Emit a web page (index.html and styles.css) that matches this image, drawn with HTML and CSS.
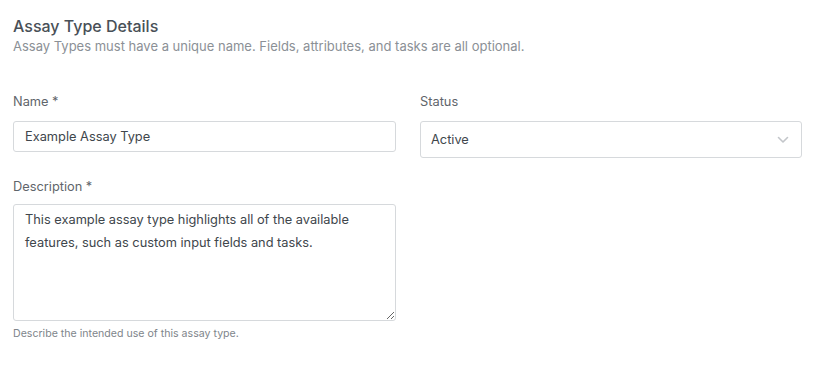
FILE: index.html
```html
<!DOCTYPE html>
<html lang="en">
<head>
    <meta charset="UTF-8">
    <meta name="viewport" content="width=device-width, initial-scale=1.0">
    <title>Assay Type Details</title>
    <link rel="stylesheet" href="styles.css">
</head>
<body>
    <div class="section">
        <div class="section-header">
            <h2>Assay Type Details</h2>
            <p>Assay Types must have a unique name. Fields, attributes, and tasks are all optional.</p>
        </div>

        <div class="form-grid">
            <div class="field">
                <label for="name">Name *</label>
                <input type="text" id="name" value="Example Assay Type">
            </div>
            <div class="field">
                <label for="status">Status</label>
                <div class="select-wrap">
                    <select id="status">
                        <option>Active</option>
                        <option>Inactive</option>
                    </select>
                    <svg class="chevron" width="12" height="8" viewBox="0 0 12 8">
                        <path d="M1.5 1.5 L6 6 L10.5 1.5" fill="none" stroke="#c3c6ca" stroke-width="1.6" stroke-linecap="round" stroke-linejoin="round"/>
                    </svg>
                </div>
            </div>
            <div class="field field-wide">
                <label for="description">Description *</label>
                <textarea id="description">This example assay type highlights all of the available features, such as custom input fields and tasks.</textarea>
                <small class="help">Describe the intended use of this assay type.</small>
            </div>
        </div>
    </div>
</body>
</html>
```

FILE: styles.css
```css
body {
    font-family: Inter, "Noto Sans", sans-serif;
    background-color: #fff;
    color: #495057;
    margin: 0;
    padding: 0;
}
.section {
    padding: 16px 11px 20px 13px;
}
.section-header h2 {
    font-size: 16px;
    font-weight: 500;
    color: #495057;
    margin: 0 0 1px 0;
    line-height: 20px;
}
.section-header p {
    font-size: 13px;
    color: #8b9096;
    margin: 0;
    line-height: 18px;
}
.form-grid {
    display: grid;
    grid-template-columns: 383px 382px;
    column-gap: 24px;
    row-gap: 21px;
    margin-top: 39px;
    align-items: start;
}
.field label {
    display: block;
    font-size: 12.8px;
    color: #5f656b;
    margin-bottom: 11px;
    line-height: 16px;
}
.field-wide label {
    margin-bottom: 9px;
}
input, select, textarea {
    font-family: inherit;
    font-size: 12.8px;
    color: #40464c;
    border: 1px solid #d6d9dc;
    border-radius: 3px;
    background-color: #fff;
    box-sizing: border-box;
    width: 100%;
    outline: none;
}
input {
    height: 31px;
    padding: 0 11px;
}
.select-wrap {
    position: relative;
}
select {
    height: 37px;
    padding: 0 10px;
    appearance: none;
    -webkit-appearance: none;
}
.chevron {
    position: absolute;
    right: 13px;
    top: 15px;
    pointer-events: none;
}
textarea {
    height: 117px;
    padding: 3px 11px;
    line-height: 23px;
    resize: vertical;
    display: block;
}
.help {
    display: block;
    font-size: 10.6px;
    color: #80858b;
    margin-top: 6px;
}
```
